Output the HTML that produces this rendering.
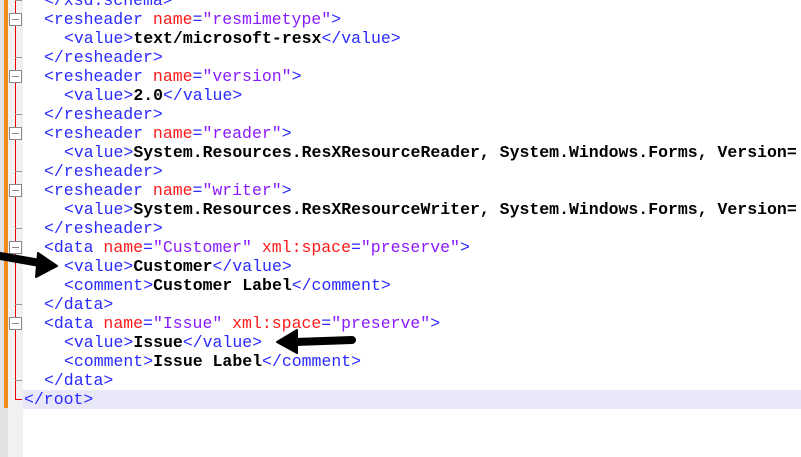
<!DOCTYPE html>
<html><head><meta charset="utf-8"><style>
html,body{margin:0;padding:0;width:801px;height:457px;overflow:hidden;background:#fff;}
body{position:relative;font-family:"Liberation Mono","Courier New",monospace;font-size:16.5px;}
.g0{position:absolute;left:0;top:0;width:4px;height:457px;background:#e2e2e2;}
.g1{position:absolute;left:4px;top:0;width:4px;height:408px;background:#f28a1e;}
.g2{position:absolute;left:8px;top:0;width:15px;height:457px;background:#f1f1f1;}
.g3{position:absolute;left:4px;top:408px;width:4px;height:49px;background:#e2e2e2;}
.hl{position:absolute;left:23px;top:390px;width:778px;height:19px;background:#e8e8fa;}
.rl{position:absolute;left:15px;width:1px;background:#e00;}
.box{position:absolute;left:9px;width:13px;height:13px;border:1px solid #888;background:#fff;box-sizing:border-box;}
.box:after{content:"";position:absolute;left:2px;top:5px;width:7px;height:1px;background:#888;}
.tk{position:absolute;left:15px;width:7px;height:1px;background:#999;}
.ln{position:absolute;height:19px;line-height:19px;white-space:pre;}
.t{color:#2a2aff}.a{color:#ff1a1a}.v{color:#8a1aff}.x{color:#000;font-weight:bold}
</style></head><body>
<div class="g0"></div><div class="g1"></div><div class="g2"></div><div class="g3"></div>
<div class="hl"></div>
<div class="rl" style="top:0;height:400px"></div>
<div style="position:absolute;left:15px;top:399px;width:7px;height:1px;background:#e00"></div>
<div class="tk" style="top:0"></div>
<div class="box" style="top:13px"></div>
<div class="tk" style="top:57px"></div>
<div class="box" style="top:70px"></div>
<div class="tk" style="top:114px"></div>
<div class="box" style="top:127px"></div>
<div class="tk" style="top:171px"></div>
<div class="box" style="top:184px"></div>
<div class="tk" style="top:228px"></div>
<div class="box" style="top:241px"></div>
<div class="tk" style="top:304px"></div>
<div class="box" style="top:317px"></div>
<div class="tk" style="top:380px"></div>

<div class="ln" style="left:44px;top:-9px"><span class="t">&lt;/xsd:schema&gt;</span></div>
<div class="ln" style="left:44px;top:10px"><span class="t">&lt;resheader </span><span class="a">name</span><span class="t">=</span><span class="v">"resmimetype"</span><span class="t">&gt;</span></div>
<div class="ln" style="left:64px;top:29px"><span class="t">&lt;value&gt;</span><span class="x">text/microsoft-resx</span><span class="t">&lt;/value&gt;</span></div>
<div class="ln" style="left:44px;top:48px"><span class="t">&lt;/resheader&gt;</span></div>
<div class="ln" style="left:44px;top:67px"><span class="t">&lt;resheader </span><span class="a">name</span><span class="t">=</span><span class="v">"version"</span><span class="t">&gt;</span></div>
<div class="ln" style="left:64px;top:86px"><span class="t">&lt;value&gt;</span><span class="x">2.0</span><span class="t">&lt;/value&gt;</span></div>
<div class="ln" style="left:44px;top:105px"><span class="t">&lt;/resheader&gt;</span></div>
<div class="ln" style="left:44px;top:124px"><span class="t">&lt;resheader </span><span class="a">name</span><span class="t">=</span><span class="v">"reader"</span><span class="t">&gt;</span></div>
<div class="ln" style="left:64px;top:143px"><span class="t">&lt;value&gt;</span><span class="x">System.Resources.ResXResourceReader, System.Windows.Forms, Version=</span></div>
<div class="ln" style="left:44px;top:162px"><span class="t">&lt;/resheader&gt;</span></div>
<div class="ln" style="left:44px;top:181px"><span class="t">&lt;resheader </span><span class="a">name</span><span class="t">=</span><span class="v">"writer"</span><span class="t">&gt;</span></div>
<div class="ln" style="left:64px;top:200px"><span class="t">&lt;value&gt;</span><span class="x">System.Resources.ResXResourceWriter, System.Windows.Forms, Version=</span></div>
<div class="ln" style="left:44px;top:219px"><span class="t">&lt;/resheader&gt;</span></div>
<div class="ln" style="left:44px;top:238px"><span class="t">&lt;data </span><span class="a">name</span><span class="t">=</span><span class="v">"Customer"</span><span class="t"> </span><span class="a">xml:space</span><span class="t">=</span><span class="v">"preserve"</span><span class="t">&gt;</span></div>
<div class="ln" style="left:64px;top:257px"><span class="t">&lt;value&gt;</span><span class="x">Customer</span><span class="t">&lt;/value&gt;</span></div>
<div class="ln" style="left:64px;top:276px"><span class="t">&lt;comment&gt;</span><span class="x">Customer Label</span><span class="t">&lt;/comment&gt;</span></div>
<div class="ln" style="left:44px;top:295px"><span class="t">&lt;/data&gt;</span></div>
<div class="ln" style="left:44px;top:314px"><span class="t">&lt;data </span><span class="a">name</span><span class="t">=</span><span class="v">"Issue"</span><span class="t"> </span><span class="a">xml:space</span><span class="t">=</span><span class="v">"preserve"</span><span class="t">&gt;</span></div>
<div class="ln" style="left:64px;top:333px"><span class="t">&lt;value&gt;</span><span class="x">Issue</span><span class="t">&lt;/value&gt;</span></div>
<div class="ln" style="left:64px;top:352px"><span class="t">&lt;comment&gt;</span><span class="x">Issue Label</span><span class="t">&lt;/comment&gt;</span></div>
<div class="ln" style="left:44px;top:371px"><span class="t">&lt;/data&gt;</span></div>
<div class="ln" style="left:24px;top:390px"><span class="t">&lt;/root&gt;</span></div>

<svg style="position:absolute;left:0;top:0" width="801" height="457">
<path d="M0,256 L40,263" stroke="#000" stroke-width="8" stroke-linecap="round" fill="none"/>
<path d="M57,266 L38,253 L36,277 Z" fill="#000" stroke="#000" stroke-width="2" stroke-linejoin="round"/>
<path d="M352,340 L295,342" stroke="#000" stroke-width="8" stroke-linecap="round" fill="none"/>
<path d="M277,342 L297,330 L297,353 Z" fill="#000" stroke="#000" stroke-width="2" stroke-linejoin="round"/>
</svg>
</body></html>
